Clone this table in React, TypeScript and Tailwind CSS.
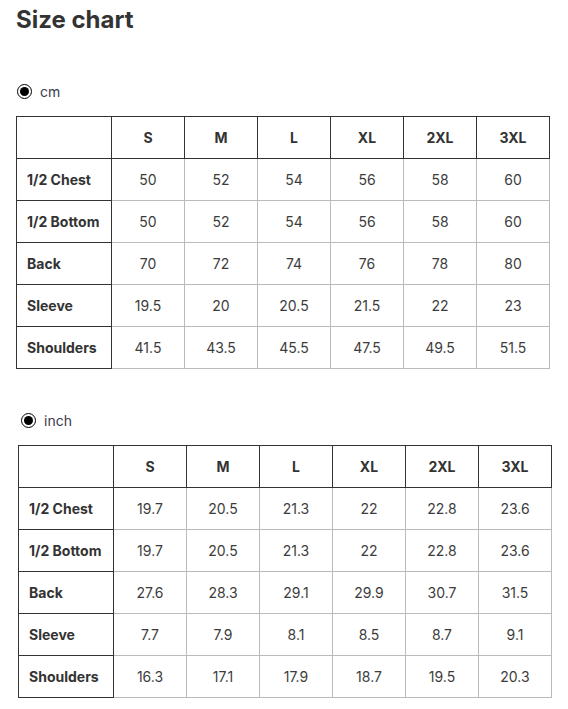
const sizes = ['S', 'M', 'L', 'XL', '2XL', '3XL'];

const cmRows: [string, string[]][] = [
  ['1/2 Chest', ['50', '52', '54', '56', '58', '60']],
  ['1/2 Bottom', ['50', '52', '54', '56', '58', '60']],
  ['Back', ['70', '72', '74', '76', '78', '80']],
  ['Sleeve', ['19.5', '20', '20.5', '21.5', '22', '23']],
  ['Shoulders', ['41.5', '43.5', '45.5', '47.5', '49.5', '51.5']],
];

const inchRows: [string, string[]][] = [
  ['1/2 Chest', ['19.7', '20.5', '21.3', '22', '22.8', '23.6']],
  ['1/2 Bottom', ['19.7', '20.5', '21.3', '22', '22.8', '23.6']],
  ['Back', ['27.6', '28.3', '29.1', '29.9', '30.7', '31.5']],
  ['Sleeve', ['7.7', '7.9', '8.1', '8.5', '8.7', '9.1']],
  ['Shoulders', ['16.3', '17.1', '17.9', '18.7', '19.5', '20.3']],
];

const Radio = ({ label }: { label: string }) => (
  <div className="flex h-4 items-center gap-2">
    <span className="flex h-[15px] w-[15px] items-center justify-center rounded-full border-[1.5px] border-black">
      <span className="h-[9px] w-[9px] rounded-full bg-black"></span>
    </span>
    <span className="text-[14px] text-[#3b3b4a]">{label}</span>
  </div>
);

const SizeTable = ({ rows }: { rows: [string, string[]][] }) => (
  <table className="w-[533px] table-fixed border-collapse text-[14px] text-[#333]">
    <colgroup>
      <col className="w-[95px]" />
      {sizes.map((s) => (
        <col key={s} className="w-[73px]" />
      ))}
    </colgroup>
    <thead>
      <tr>
        <th className="h-[42px] border border-[#333]"></th>
        {sizes.map((s) => (
          <th key={s} className="h-[42px] border border-[#333] text-center font-bold">
            {s}
          </th>
        ))}
      </tr>
    </thead>
    <tbody>
      {rows.map(([name, values]) => (
        <tr key={name}>
          <td className="h-[42px] border border-[#333] pl-[10px] text-left font-bold">{name}</td>
          {values.map((v, i) => (
            <td key={i} className="h-[42px] border border-[#bbb] text-center text-[#3c3c3c]">
              {v}
            </td>
          ))}
        </tr>
      ))}
    </tbody>
  </table>
);

export default function App() {
  return (
    <div className="min-h-[709px] bg-white pl-4 font-['Inter',sans-serif] text-[#333]">
      <h1 className="pt-[4px] text-[24px] leading-[32px] font-bold">Size chart</h1>
      <div className="mt-[47px] pl-px">
        <Radio label="cm" />
      </div>
      <div className="mt-[17px]">
        <SizeTable rows={cmRows} />
      </div>
      <div className="mt-[43px] ml-[2px] pl-[3px]">
        <Radio label="inch" />
      </div>
      <div className="mt-[17px] ml-[2px]">
        <SizeTable rows={inchRows} />
      </div>
    </div>
  );
}
